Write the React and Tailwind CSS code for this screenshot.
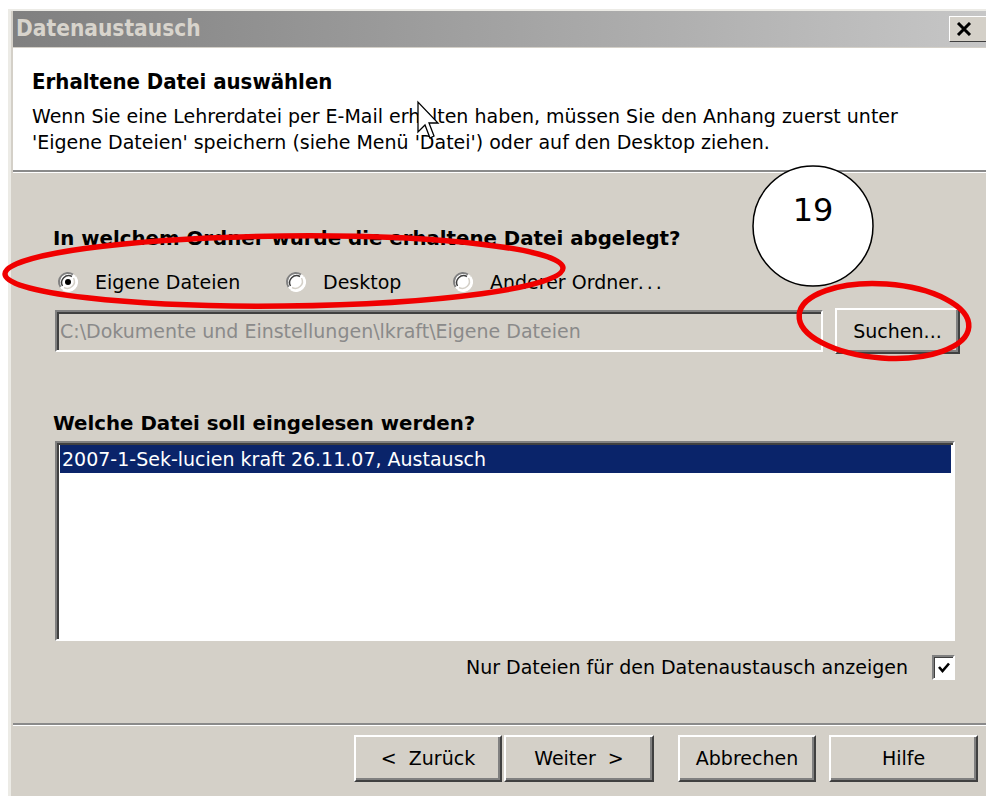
import React from "react";

// Classic Windows raised button
function Button({ children, className = "" }) {
  return (
    <div
      className={`flex items-center justify-center border-2 border-t-white border-l-white border-r-[#404040] border-b-[#404040] bg-[#d4d0c8] shadow-[inset_-2px_-2px_0_#808080] text-[19px] text-black ${className}`}
    >
      {children}
    </div>
  );
}

function Radio({ checked, label, className = "" }) {
  return (
    <div className={`flex items-center ${className}`}>
      <svg width="22" height="22" viewBox="0 0 22 22" className="shrink-0">
        <circle cx="11" cy="11" r="9.5" fill="#ffffff" />
        <path d="M3.5 16 A9 9 0 0 1 16 3.5" stroke="#808080" strokeWidth="2" fill="none" />
        <path d="M5.5 15 A7 7 0 0 1 15 5.5" stroke="#404040" strokeWidth="1.5" fill="none" />
        <path d="M18.5 6 A9 9 0 0 1 6 18.5" stroke="#ffffff" strokeWidth="2" fill="none" />
        <path d="M16.5 7 A7 7 0 0 1 7 16.5" stroke="#d4d0c8" strokeWidth="1.5" fill="none" />
        {checked && <circle cx="11" cy="11" r="3" fill="#000000" />}
      </svg>
      <span className="ml-[16px] text-[19px] text-black">{label}</span>
    </div>
  );
}

export default function App() {
  return (
    <div className="relative h-[796px] w-[986px] overflow-hidden bg-white font-['DejaVu_Sans',sans-serif]">
      {/* dialog window frame */}
      <div className="ml-[8px] mt-[9px] h-[787px] w-[1000px] border-l-[3px] border-t-[2px] border-[#ecebe6] bg-[#d4d0c8] pl-[2px]">
        {/* title bar */}
        <div className="flex h-[36px] items-center bg-gradient-to-r from-[#808080] to-[#c8c8c8] pl-[3px] pr-[21px]">
          <span className="font-['DejaVu_Sans_Condensed',sans-serif] text-[22.5px] font-bold text-[#d8d4cc]">
            Datenaustausch
          </span>
          <div className="ml-auto flex h-[26px] w-[38px] items-center border-[1.5px] border-t-white border-l-white border-r-[#404040] border-b-[#404040] bg-[#d4d0c8] pl-[6px]">
            <svg width="16" height="14" viewBox="0 0 16 14">
              <path d="M2 1 L14 13 M14 1 L2 13" stroke="#000" strokeWidth="3" />
            </svg>
          </div>
        </div>

        {/* white header */}
        <div className="mt-[1px] h-[122px] bg-white pl-[19px] pt-[22px]">
          <div className="font-['DejaVu_Sans_Condensed',sans-serif] text-[22px] font-bold leading-[24px] text-black">
            Erhaltene Datei auswählen
          </div>
          <div className="mt-[9px] text-[19px] leading-[26px] text-black">
            <div>Wenn Sie eine Lehrerdatei per E-Mail erhalten haben, müssen Sie den Anhang zuerst unter</div>
            <div>'Eigene Dateien' speichern (siehe Menü 'Datei') oder auf den Desktop ziehen.</div>
          </div>
        </div>
        <div className="h-[2px] bg-[#8a8a8a]" />
        <div className="h-[1px] bg-white" />

        {/* body */}
        <div className="pl-[40px]">
          <div className="mt-[54px] text-[19.8px] font-bold leading-[24px] text-black">
            In welchem Ordner wurde die erhaltene Datei abgelegt?
          </div>
          <div className="mt-[18px] flex h-[26px] items-center pl-[4px]">
            <Radio checked label="Eigene Dateien" className="w-[228px]" />
            <Radio label="Desktop" className="w-[167px]" />
            <Radio label={<span>Anderer Ordner<span className="tracking-[3px]">...</span></span>} />
          </div>
          <div className="mt-[13px] flex h-[46px] items-center">
            <div className="ml-[2px] flex h-[42px] w-[768px] items-center border-2 border-t-[#808080] border-l-[#808080] border-r-white border-b-white bg-[#d4d0c8] pl-[1px] text-[19px] text-[#8a8a8a] shadow-[inset_2px_2px_0_#404040]">
              <span className="pl-[2px]">C:\Dokumente und Einstellungen\lkraft\Eigene Dateien</span>
            </div>
            <Button className="ml-[12px] h-[46px] w-[125px]">Suchen...</Button>
          </div>

          <div className="mt-[58px] text-[19.8px] font-bold leading-[24px] text-black">
            Welche Datei soll eingelesen werden?
          </div>
          <div className="ml-[2px] mt-[5px] h-[200px] w-[900px] border-2 border-t-[#808080] border-l-[#808080] border-r-white border-b-white bg-white shadow-[inset_2px_2px_0_#404040] p-[2px] pl-[3px] pt-[2px]">
            <div className="flex h-[28px] items-center bg-[#0a246a] pl-[2px] text-[19px] text-white">
              2007-1-Sek-lucien kraft 26.11.07, Austausch
            </div>
          </div>

          <div className="ml-[2px] mt-[14px] flex h-[25px] w-[900px] items-center justify-end">
            <span className="text-[19px] text-black">Nur Dateien für den Datenaustausch anzeigen</span>
            <div className="ml-[24px] flex h-[25px] w-[23px] items-center justify-center border-2 border-t-[#808080] border-l-[#808080] border-r-white border-b-white bg-white shadow-[inset_1px_1px_0_#404040]">
              <svg width="14" height="14" viewBox="0 0 14 14">
                <path d="M2 6 L5.5 10 L12 2.5" stroke="#000" strokeWidth="2.6" fill="none" />
              </svg>
            </div>
          </div>
        </div>

        <div className="mt-[43px] h-[2px] bg-[#8a8a8a]" />
        <div className="h-[1px] bg-white" />

        {/* button row */}
        <div className="mt-[9px] flex h-[47px] pl-[341px]">
          <Button className="h-[47px] w-[148px]">&lt;&nbsp; Zurück</Button>
          <Button className="ml-[2px] h-[47px] w-[150px]">Weiter&nbsp; &gt;</Button>
          <Button className="ml-[24px] h-[47px] w-[138px]">Abbrechen</Button>
          <Button className="ml-[13px] h-[47px] w-[149px]">Hilfe</Button>
        </div>
      </div>

      {/* annotation marks drawn over the dialog */}
      <svg
        className="pointer-events-none absolute left-0 top-0"
        width="986"
        height="796"
        viewBox="0 0 986 796"
      >
        <ellipse cx="284" cy="271" rx="279" ry="35" fill="none" stroke="#f00000" strokeWidth="5.5" transform="rotate(-0.6 284 271)" />
        <ellipse cx="884" cy="321" rx="85" ry="37" fill="none" stroke="#f00000" strokeWidth="5.5" transform="rotate(4 884 321)" />
        <circle cx="813" cy="226" r="60" fill="#ffffff" stroke="#000" strokeWidth="1.5" />
        {/* mouse pointer */}
        <path d="M418 102 L418 132 L425 125 L430 138 L434 136 L429 123 L438 123 Z" fill="#ffffff" stroke="#000" strokeWidth="1.3" />
      </svg>
      <div className="pointer-events-none absolute left-[753px] top-[190px] w-[120px] text-center font-['DejaVu_Sans',sans-serif] text-[32px] leading-[40px] text-black">
        19
      </div>
    </div>
  );
}
